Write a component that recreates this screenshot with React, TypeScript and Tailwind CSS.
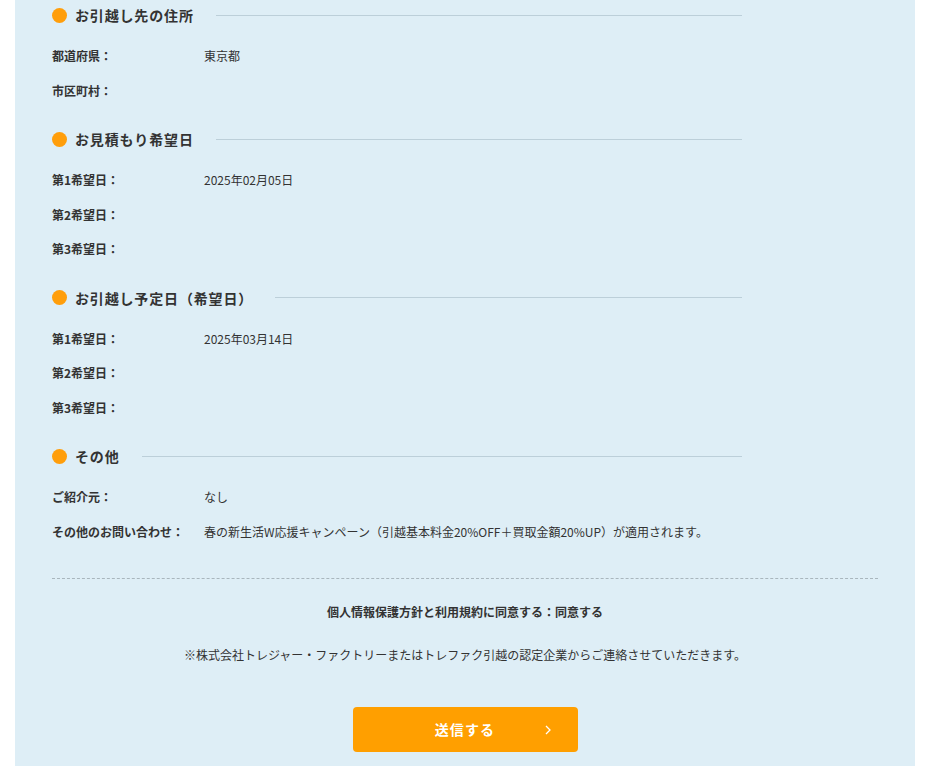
const sections = [
  {
    title: "お引越し先の住所",
    rows: [
      ["都道府県：", "東京都"],
      ["市区町村：", ""],
    ],
  },
  {
    title: "お見積もり希望日",
    rows: [
      ["第1希望日：", "2025年02月05日"],
      ["第2希望日：", ""],
      ["第3希望日：", ""],
    ],
  },
  {
    title: "お引越し予定日（希望日）",
    rows: [
      ["第1希望日：", "2025年03月14日"],
      ["第2希望日：", ""],
      ["第3希望日：", ""],
    ],
  },
  {
    title: "その他",
    rows: [
      ["ご紹介元：", "なし"],
      [
        "その他のお問い合わせ：",
        "春の新生活W応援キャンペーン（引越基本料金20%OFF＋買取金額20%UP）が適用されます。",
      ],
    ],
  },
];

export default function App() {
  return (
    <div
      className="min-h-[766px] bg-white px-[15px] text-[#333]"
      style={{ fontFamily: '"Noto Sans CJK JP", "Noto Sans", sans-serif' }}
    >
      <div className="min-h-[766px] w-[900px] bg-[#deeef6] px-[37px] pt-[4px] pb-4">
        {sections.map((s) => (
          <section key={s.title} className="mb-[20px]">
            <div className="flex w-[690px] items-center h-[22px]">
              <span className="h-[15px] w-[15px] shrink-0 rounded-full bg-[#ff9e0b]" />
              <h2 className="ml-2 text-[14px] font-bold tracking-[0.06em] leading-[22px]">
                {s.title}
              </h2>
              <div className="ml-[22px] h-px flex-1 bg-[#bccfd9]" />
            </div>
            <dl className="mt-[13px]">
              {s.rows.map(([k, v]) => (
                <div key={k} className="flex h-[34.5px] items-center text-[12px]">
                  <dt className="w-[152px] shrink-0 font-bold">{k}</dt>
                  <dd>{v}</dd>
                </div>
              ))}
            </dl>
          </section>
        ))}
        <div className="mt-[29px] border-t border-dashed border-[#a9b6bd]" />
        <p className="mt-[24px] text-center text-[12px] font-bold">
          個人情報保護方針と利用規約に同意する：同意する
        </p>
        <p className="mt-[25px] text-center text-[12px]">
          ※株式会社トレジャー・ファクトリーまたはトレファク引越の認定企業からご連絡させていただきます。
        </p>
        <div className="mt-[43px] flex justify-center">
          <button className="relative flex h-[45px] w-[225px] items-center justify-center rounded-[4px] bg-[#ff9f00] text-[14px] font-bold tracking-[0.08em] text-white">
            送信する
            <svg
              className="absolute right-[26px] top-1/2 -translate-y-1/2"
              width="8"
              height="12"
              viewBox="0 0 8 12"
              fill="none"
              stroke="white"
              strokeWidth="1.3"
            >
              <path d="M2 2l4 4-4 4" />
            </svg>
          </button>
        </div>
      </div>
    </div>
  );
}
